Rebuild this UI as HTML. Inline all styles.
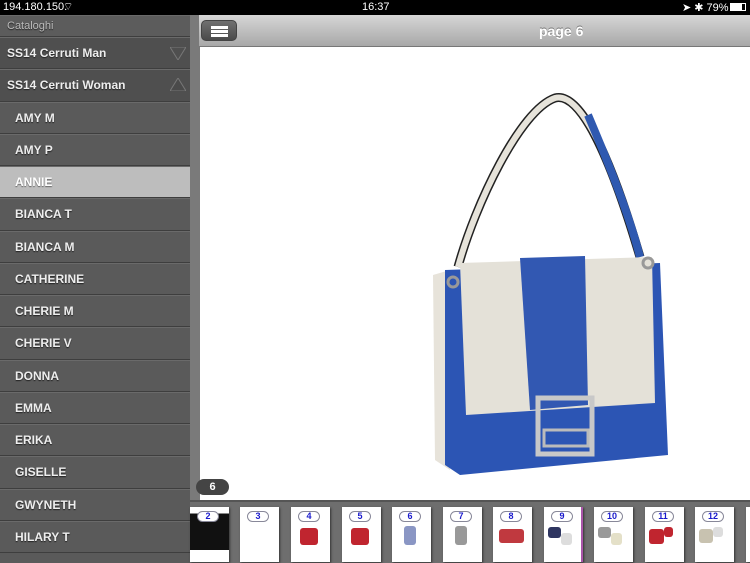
<!DOCTYPE html>
<html><head><meta charset="utf-8"><style>
*{margin:0;padding:0;box-sizing:border-box}
body{width:750px;height:563px;overflow:hidden;background:#fff;font-family:"Liberation Sans",sans-serif;position:relative}
.sb{position:absolute;left:0;top:0;width:750px;height:15px;background:#000;color:#fff;font-size:11px}
.side{position:absolute;left:0;top:15px;width:190px;height:548px;background:#5a5a5a}
.row{height:32.25px;border-bottom:1px solid #3e3e3e;border-top:1px solid #6a6a6a;color:#eee;font-weight:bold;font-size:12px;line-height:30px;text-shadow:0 1px 1px #222;padding-left:15px}
.cat{background:#4f4f4f;padding-left:7px;position:relative}
.sel{background:#bdbdbd;color:#fff;text-shadow:0 1px 1px #666}
.div{position:absolute;left:190px;top:15px;width:10px;height:548px;background:#7a7a7a}
.top{position:absolute;left:199px;top:15px;width:551px;height:32px;background:linear-gradient(#d6d6d6,#a8a8a8);border-bottom:1px solid #777}
.btn{position:absolute;left:2px;top:5px;width:36px;height:21px;border-radius:5px;background:linear-gradient(#707070,#4a4a4a);border:1px solid #444}
.btn i{position:absolute;left:9px;width:17px;height:3px;background:#fff}
.strip{position:absolute;left:190px;top:500px;width:560px;height:63px;background:#6e6e6e;border-top:2px solid #555}
.th{position:absolute;top:5px;width:39px;height:55px;background:#fff;box-shadow:1px 1px 2px #333}
.th b{position:absolute;left:7px;top:4px;width:22px;height:11px;border:1px solid #889;border-radius:6px;background:#fff;color:#1a1acc;font-size:9px;text-align:center;line-height:9px}
.th i{position:absolute;border-radius:3px}
</style></head><body>
<div class="sb"><span style="position:absolute;left:3px;top:1px">194.180.150.</span><span style="position:absolute;left:63px;top:0">⌔</span><span style="position:absolute;left:362px;top:1px">16:37</span><span style="position:absolute;left:682px;top:1px">➤ ✱ 79%</span><span style="position:absolute;left:730px;top:3px;width:16px;height:8px;border:1px solid #fff"><span style="display:block;width:11px;height:6px;background:#fff"></span></span></div>
<div class="side">
<div class="row cat" style="height:22px;line-height:20px;font-weight:normal;color:#bbb;font-size:11px;background:#5c5c5c">Cataloghi</div>
<div class="row cat">SS14 Cerruti Man<svg style="position:absolute;right:4px;top:9px" width="16" height="13"><path d="M0 0H16L8 13Z" fill="none" stroke="#777"/></svg></div>
<div class="row cat">SS14 Cerruti Woman<svg style="position:absolute;right:4px;top:8px" width="16" height="13"><path d="M0 13H16L8 0Z" fill="#4a4a4a" stroke="#777"/></svg></div>
<div class="row">AMY M</div><div class="row">AMY P</div><div class="row sel">ANNIE</div><div class="row">BIANCA T</div><div class="row">BIANCA M</div><div class="row">CATHERINE</div><div class="row">CHERIE M</div><div class="row">CHERIE V</div><div class="row">DONNA</div><div class="row">EMMA</div><div class="row">ERIKA</div><div class="row">GISELLE</div><div class="row">GWYNETH</div><div class="row">HILARY T</div>
</div>
<div class="div"></div>
<div class="top"><div class="btn"><i style="top:5px"></i><i style="top:9px"></i><i style="top:13px"></i></div><div style="position:absolute;left:340px;top:8px;color:#fff;font-weight:bold;font-size:14px;text-shadow:0 -1px 0 #777">page 6</div></div>
<svg style="position:absolute;left:420px;top:85px" width="260" height="395">
<path d="M38 182 C55 120 100 25 135 13 C160 6 190 70 220 172" fill="none" stroke="#222" stroke-width="9"/>
<path d="M38 182 C55 120 100 25 135 13 C160 6 190 70 220 172" fill="none" stroke="#e6e3da" stroke-width="6"/>
<path d="M168 30 C185 70 208 125 220 172" fill="none" stroke="#2f59b0" stroke-width="8"/>
<path d="M13 190 L30 185 L30 385 L15 375Z" fill="#e7e3da"/>
<path d="M25 185 L240 178 L248 370 L40 390 L25 380Z" fill="#2c55b4"/>
<path d="M40 178 L232 172 L235 318 L46 330Z" fill="#e4e1d8"/>
<path d="M100 173 L165 171 L168 320 L110 325Z" fill="#3258b2"/>
<rect x="118" y="313" width="54" height="56" fill="none" stroke="#c8c8c8" stroke-width="5"/>
<rect x="124" y="345" width="44" height="16" fill="none" stroke="#bbb" stroke-width="3"/>
<circle cx="33" cy="197" r="5" fill="none" stroke="#999" stroke-width="3"/><circle cx="228" cy="178" r="5" fill="none" stroke="#999" stroke-width="3"/>
</svg>
<div style="position:absolute;left:196px;top:479px;width:33px;height:16px;border-radius:8px;background:#444;color:#fff;font-weight:bold;font-size:11px;text-align:center;line-height:16px">6</div>
<div class="strip">
<div class="th" style="left:0;background:linear-gradient(#fff 0 12%,#111 12% 78%,#fff 78%)"><b>2</b></div>
<div class="th" style="left:50px"><b>3</b></div>
<div class="th" style="left:101px"><b>4</b><i style="left:9px;top:21px;width:18px;height:17px;background:#c0252f"></i></div>
<div class="th" style="left:152px"><b>5</b><i style="left:9px;top:21px;width:18px;height:17px;background:#c0252f"></i></div>
<div class="th" style="left:202px"><b>6</b><i style="left:12px;top:19px;width:12px;height:19px;background:#8a96c4"></i></div>
<div class="th" style="left:253px"><b>7</b><i style="left:12px;top:19px;width:12px;height:19px;background:#999"></i></div>
<div class="th" style="left:303px"><b>8</b><i style="left:6px;top:22px;width:25px;height:14px;background:#c0393f"></i></div>
<div class="th" style="left:354px;border-right:2px solid #a5a"><b>9</b><i style="left:4px;top:20px;width:13px;height:11px;background:#2e3560"></i><i style="left:17px;top:26px;width:11px;height:12px;background:#ddd"></i></div>
<div class="th" style="left:404px"><b>10</b><i style="left:4px;top:20px;width:13px;height:11px;background:#999"></i><i style="left:17px;top:26px;width:11px;height:12px;background:#e4e0c8"></i></div>
<div class="th" style="left:455px"><b>11</b><i style="left:4px;top:22px;width:15px;height:15px;background:#c0252f"></i><i style="left:19px;top:20px;width:9px;height:10px;background:#c0252f"></i></div>
<div class="th" style="left:505px"><b>12</b><i style="left:4px;top:22px;width:14px;height:14px;background:#c8c2b0"></i><i style="left:18px;top:20px;width:10px;height:10px;background:#ddd"></i></div>
<div class="th" style="left:556px"></div>
</div>
</body></html>
